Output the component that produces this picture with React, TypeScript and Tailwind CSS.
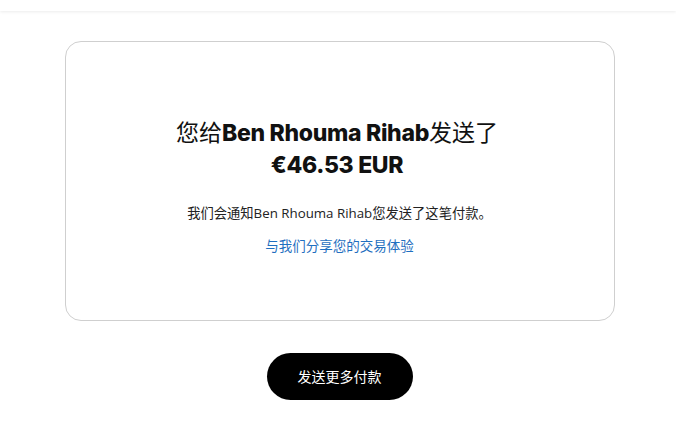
export default function App() {
  const cjk = { fontFamily: '"Open Sans", "Noto Sans CJK SC", sans-serif' };
  const heavy = { fontFamily: 'Inter, "Noto Sans CJK SC", sans-serif' };
  return (
    <div className="min-h-[432px] bg-white" style={cjk}>
      {/* Header strip */}
      <div className="h-[11px] bg-white shadow-[0_1px_3px_rgba(0,0,0,0.08)]" />

      <div className="flex flex-col items-center pt-[30px] pl-[3px]">
        {/* Confirmation card */}
        <div className="w-[550px] rounded-[16px] border border-[#cfcfcf] bg-white px-6 pt-[75px] pb-[64px] flex flex-col items-center text-center">
          <h1 className="text-[23px] leading-[31px] text-[#111] font-normal -ml-[5px]">
            您给<span className="font-extrabold tracking-[-0.3px]" style={heavy}>Ben Rhouma Rihab</span>发送了
            <br />
            <span className="font-extrabold tracking-[-0.3px]" style={heavy}>€46.53 EUR</span>
          </h1>
          <p className="mt-[22px] text-[13.3px] leading-[20px] text-[#222]">
            我们会通知Ben Rhouma Rihab您发送了这笔付款。
          </p>
          <a className="mt-[13px] text-[13.5px] leading-[20px] text-[#1f6fc0] cursor-pointer">
            与我们分享您的交易体验
          </a>
        </div>

        {/* Action */}
        <button className="mt-[32px] h-[47px] w-[146px] rounded-full bg-black text-white text-[14px]">
          发送更多付款
        </button>
      </div>
    </div>
  );
}
